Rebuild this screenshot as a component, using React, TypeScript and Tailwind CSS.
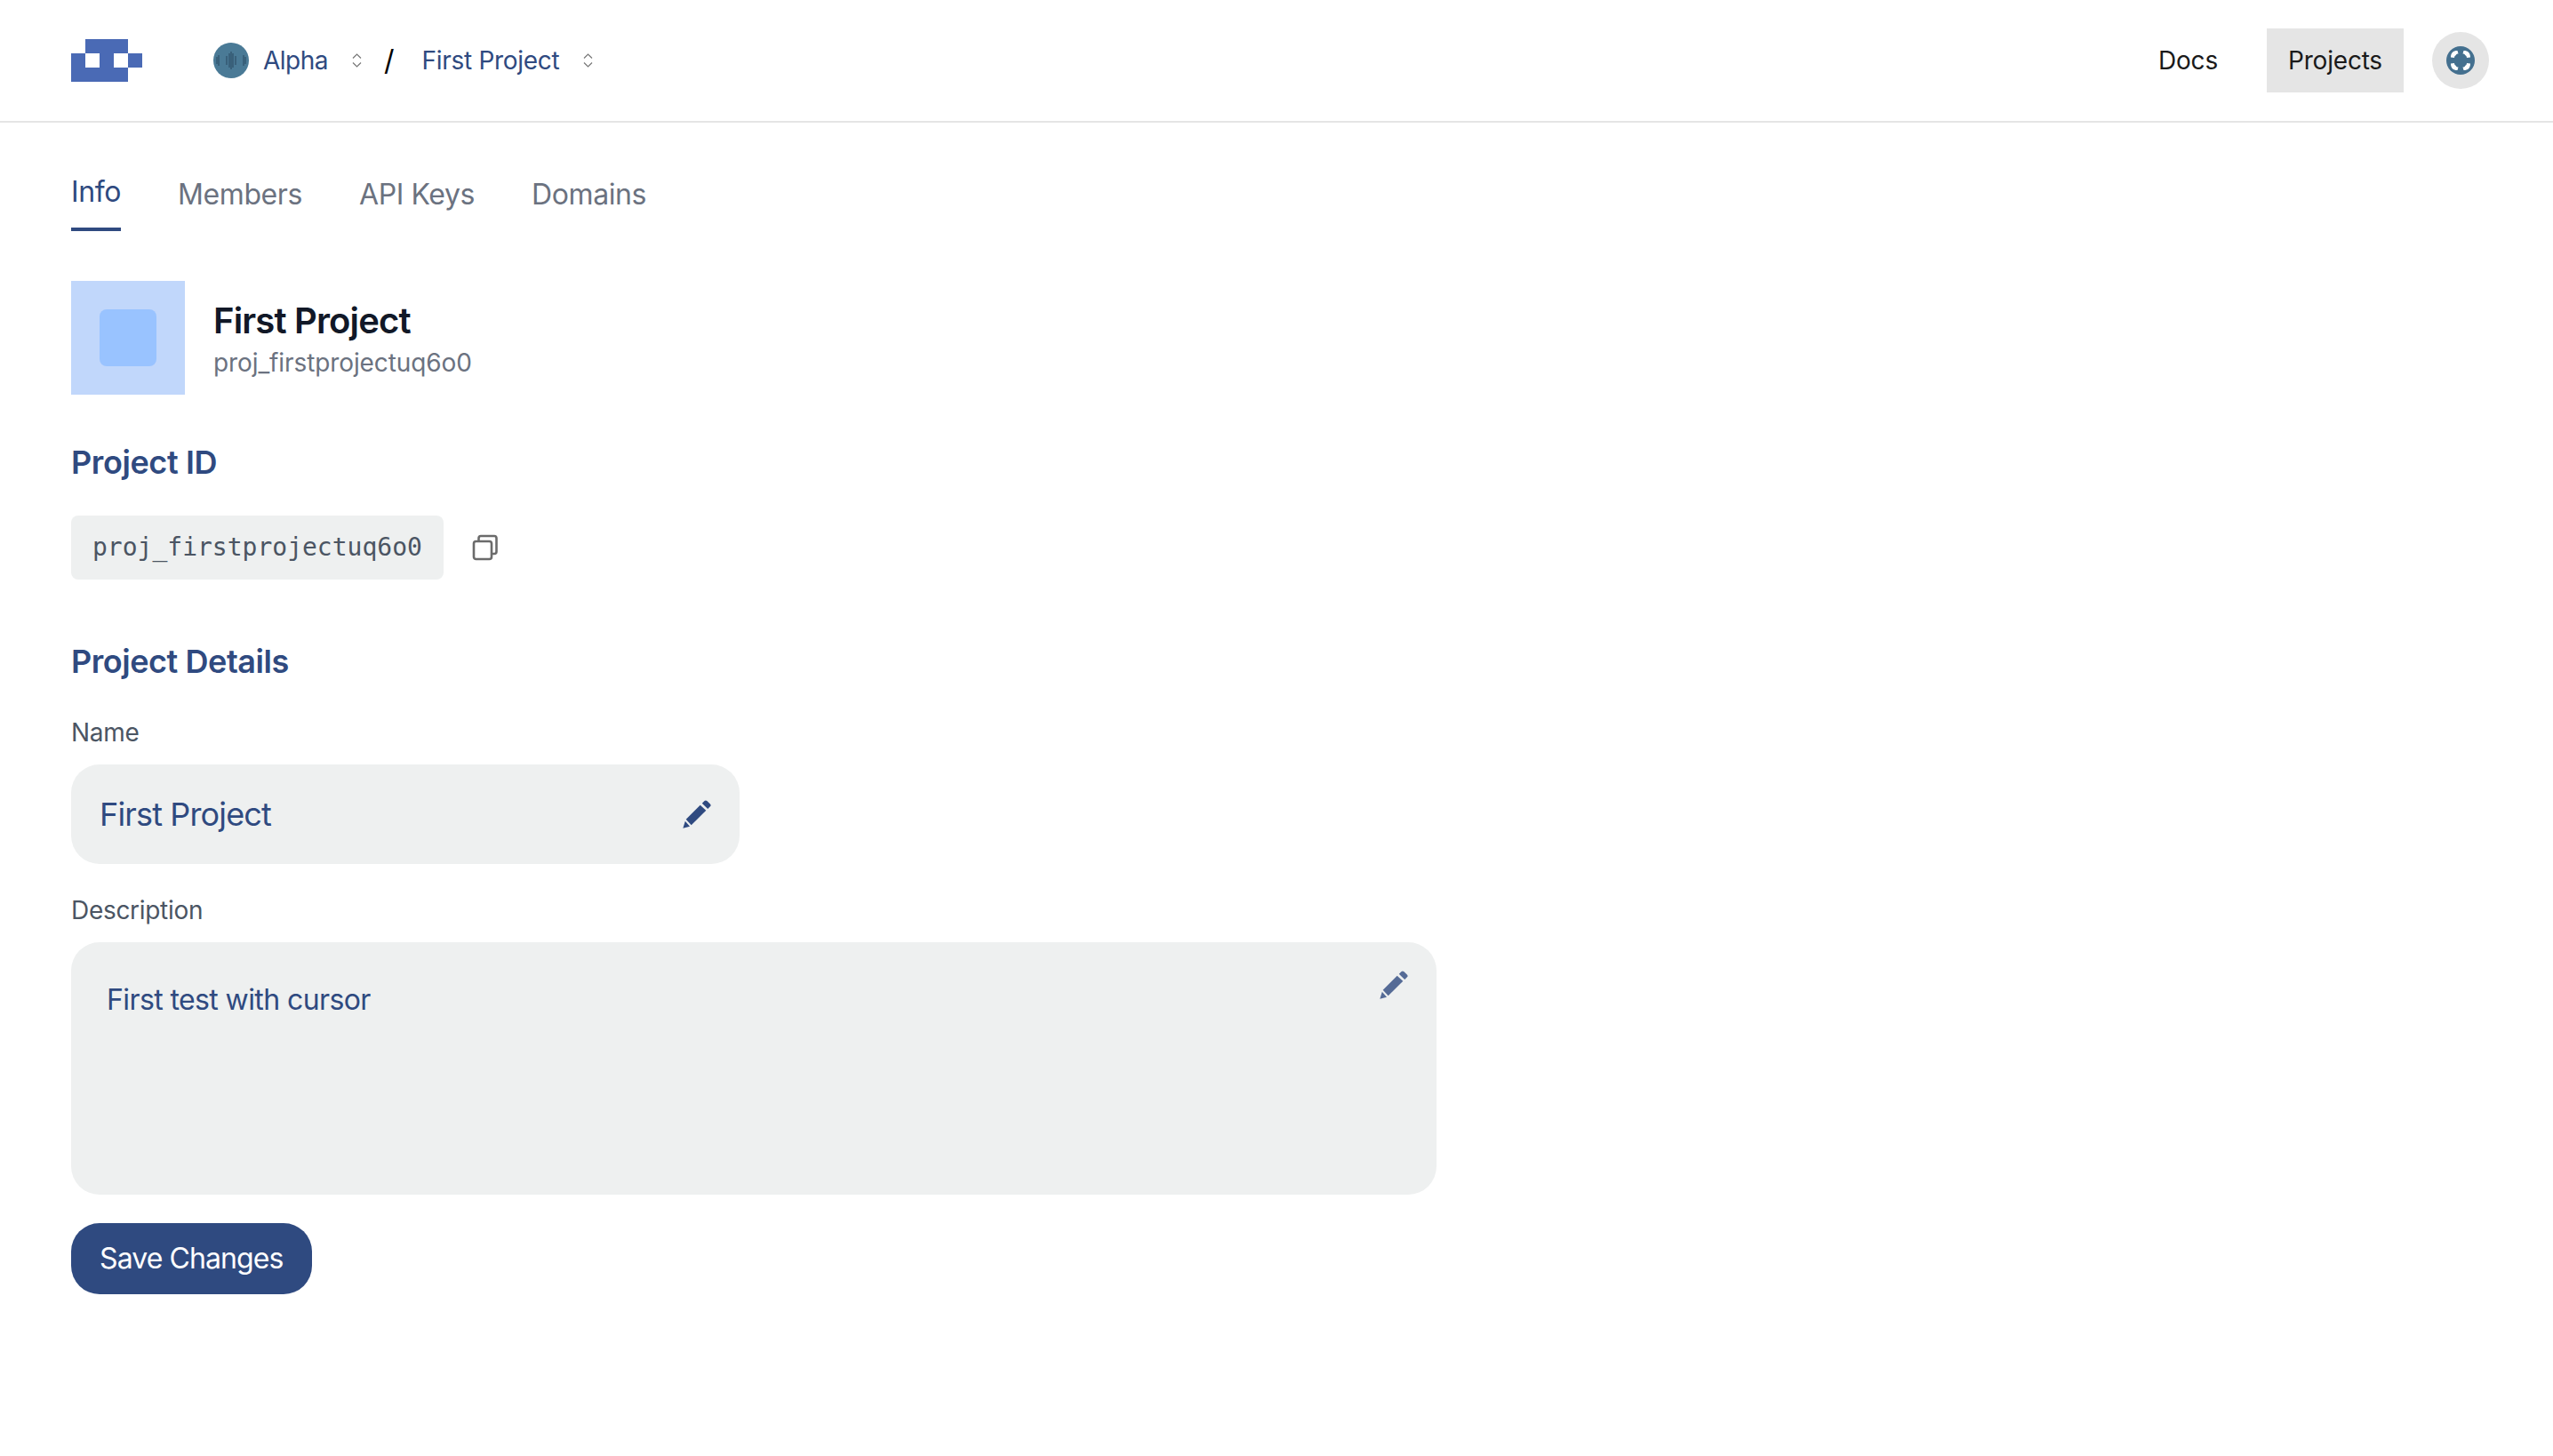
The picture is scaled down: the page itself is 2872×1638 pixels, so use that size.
import React from 'react';

const navy = 'text-[#2f4a80]';

const Logo = () => (
  <svg width="80" height="48" viewBox="0 0 80 48" fill="#4a6ab5" className="shrink-0">
    <path d="M16 0h48v16H16z" />
    <path d="M0 16h16v16H0zM32 16h16v16H32zM64 16h16v16H64z" />
    <path d="M0 32h64v16H0z" />
  </svg>
);

const OrgAvatar = () => (
  <svg width="40" height="40" viewBox="0 0 40 40" className="shrink-0">
    <circle cx="20" cy="20" r="20" fill="#4a7a96" />
    <g stroke="#33566f" strokeWidth="1.4">
      <path d="M4 16v8M6 14v12M15 15v10M18 12v16M20 10v20M22 12v16M25 15v10M34 14v12M36 16v8" />
    </g>
  </svg>
);

const Chevrons = () => (
  <svg width="11" height="16" viewBox="0 0 11 16" fill="none" stroke="#777" strokeWidth="1.2" className="shrink-0">
    <path d="M1 5.5 5.5 1 10 5.5M1 10.5 5.5 15 10 10.5" />
  </svg>
);

const UserIcon = () => (
  <svg width="32" height="32" viewBox="0 0 32 32">
    <circle cx="16" cy="16" r="16" fill="#44708f" />
    <g fill="#fff">
      <path d="M5 12.5C5 7.500 7.500 5 12.500 5l1 3.500c-1.500 0-2.500.5-2.500 1.500-1.500.5-2 2-2 3z" />
      <path d="M27 12.500C27 7.500 24.500 5 19.500 5l-1 3.500c1.500 0 2.500.5 2.500 1.500 1.500.5 2 2 2 3z" />
      <path d="M5 19.500C5 24.500 7.500 27 12.500 27l1-3.500c-1.500 0-2.500-.5-2.500-1.500-1.500-.5-2-2-2-3z" />
      <path d="M27 19.500C27 24.500 24.500 27 19.500 27l-1-3.500c1.500 0 2.500-.5 2.500-1.500 1.500-.5 2-2 2-3z" />
    </g>
  </svg>
);

const CopyIcon = () => (
  <svg width="30" height="30" viewBox="0 0 30 30" fill="none" stroke="#6b6b6b" strokeWidth="2.6" className="shrink-0">
    <rect x="2" y="8" width="20" height="20" rx="2.5" />
    <path d="M7.5 8V4.500A2.500 2.500 0 0 1 10 2h15a2.500 2.500 0 0 1 2.500 2.500v15A2.500 2.500 0 0 1 25 22h-3" />
  </svg>
);

const Pencil = ({ className }: { className?: string }) => (
  <svg width="32" height="32" viewBox="0 0 32 32" fill="#2f4a80" className={className}>
    <path d="M3.700 21.700 19.700 5.700 26.300 11.700 9.700 28.300z" />
    <path d="M21.800 3.800 24.500 1.100a2 2 0 0 1 2.800 0l3.600 3.400a2 2 0 0 1 0 2.800L28.200 10z" />
    <path d="M2.800 23.800 8 29.800.3 31.700z" />
  </svg>
);

const tabs = ['Members', 'API Keys', 'Domains'];

export default function App() {
  return (
    <div className="min-h-screen bg-white font-['Inter',sans-serif]">
      <header className="flex h-[138px] items-center border-b-2 border-[#e5e5e5] pl-20 pr-[72px]">
        <Logo />
        <div className={`ml-20 flex items-center text-[28px] ${navy}`}>
          <OrgAvatar />
          <span className="ml-4 tracking-[-0.5px]">Alpha</span>
          <span className="ml-[27px]"><Chevrons /></span>
          <span className="ml-[25px] text-[32px] leading-none text-black">/</span>
          <span className="ml-[31px] tracking-[-0.3px]">First Project</span>
          <span className="ml-[27px]"><Chevrons /></span>
        </div>
        <nav className="ml-auto flex items-center text-[28px] tracking-[-0.2px] text-[#1a1a1a]">
          <span className="py-4 pl-6 pr-[23px]">Docs</span>
          <span className="ml-8 flex h-[72px] w-[154px] items-center justify-center bg-[#e5e5e5]">Projects</span>
          <span className="ml-8 flex h-16 w-16 items-center justify-center rounded-full bg-[#e5e5e5]">
            <UserIcon />
          </span>
        </nav>
      </header>

      <main className="px-20">
        <div className="mt-[58px] flex items-end gap-16 text-[32px] leading-10 tracking-[-0.4px] text-[#6b7280]">
          <span className={`border-b-4 border-[#2f4a80] pb-5 ${navy}`}>Info</span>
          {tabs.map(t => (
            <span key={t} className="pb-[21px]">{t}</span>
          ))}
        </div>

        <div className="mt-14 flex items-start gap-8">
          <div className="flex h-32 w-32 items-center justify-center bg-[#c1d7fb]">
            <div className="h-16 w-16 rounded-lg bg-[#99c3ff]" />
          </div>
          <div className="pt-[21px]">
            <h1 className="text-[40px] font-semibold leading-[48px] tracking-[-0.85px] text-[#111827]">First Project</h1>
            <p className="mt-[3px] text-[28px] leading-10 tracking-[-0.1px] text-[#6b7280]">proj_firstprojectuq6o0</p>
          </div>
        </div>

        <h2 className={`mt-14 text-[36px] font-semibold leading-10 tracking-[-0.4px] ${navy}`}>Project ID</h2>
        <div className="mt-10 flex items-center gap-8">
          <code className="flex h-[72px] items-center rounded-lg bg-[#eef0f0] px-6 font-['DejaVu_Sans_Mono',monospace] text-[28px] text-[#4b5563]">
            proj_firstprojectuq6o0
          </code>
          <CopyIcon />
        </div>

        <h2 className={`mt-[72px] text-[36px] font-semibold leading-10 tracking-[-0.45px] ${navy}`}>Project Details</h2>

        <label className="mt-11 block text-[28px] leading-8 tracking-[-0.3px] text-[#4b5563]">Name</label>
        <div className={`mt-5 flex h-28 w-[752px] items-center justify-between rounded-[32px] bg-[#eef0f0] px-8 text-[36px] tracking-[-0.85px] ${navy}`}>
          <span>First Project</span>
          <Pencil />
        </div>

        <label className="mt-9 block text-[28px] leading-8 tracking-[-0.3px] text-[#4b5563]">Description</label>
        <div className={`mt-5 flex h-[284px] w-[1536px] items-start justify-between rounded-[32px] bg-[#eef0f0] pl-10 pr-8 pt-8 text-[32px] leading-10 tracking-[-0.6px] ${navy}`}>
          <span className="pt-[13px]">First test with cursor</span>
          <Pencil className="opacity-80" />
        </div>

        <button className="mt-8 flex h-20 items-center rounded-[32px] bg-[#2f4a80] px-8 text-[32px] tracking-[-0.9px] text-white">
          Save Changes
        </button>
      </main>
    </div>
  );
}
